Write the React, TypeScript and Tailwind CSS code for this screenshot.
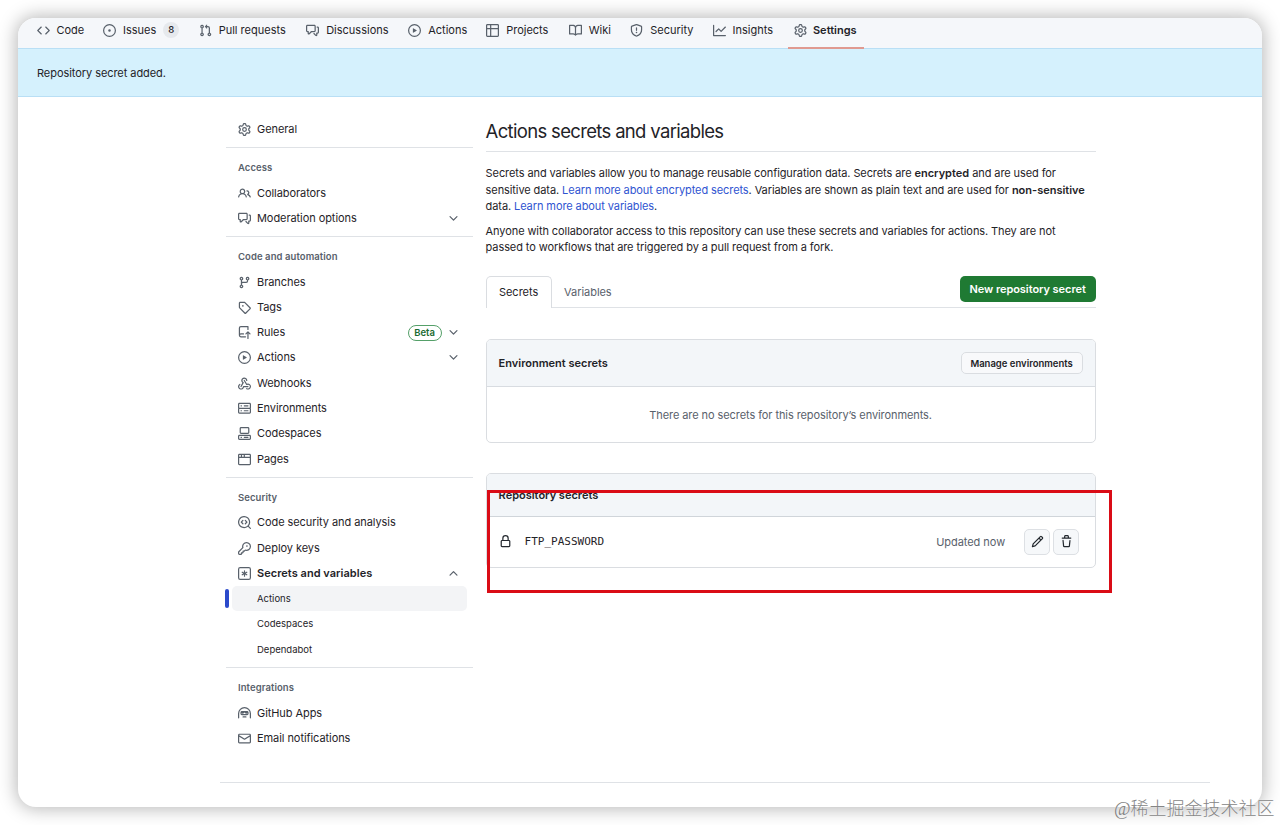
import React from "react";

const PATHS: Record<string, string[]> = {
  code: ["m11.28 3.22 4.25 4.25a.75.75 0 0 1 0 1.06l-4.25 4.25a.749.749 0 0 1-1.275-.326.749.749 0 0 1 .215-.734L13.94 8l-3.72-3.72a.749.749 0 0 1 .326-1.275.749.749 0 0 1 .734.215Zm-6.56 0a.751.751 0 0 1 1.042.018.751.751 0 0 1 .018 1.042L2.06 8l3.72 3.72a.749.749 0 0 1-.326 1.275.749.749 0 0 1-.734-.215L.47 8.53a.75.75 0 0 1 0-1.06Z"],
  issue: ["M8 9.5a1.5 1.5 0 1 0 0-3 1.5 1.5 0 0 0 0 3Z", "M8 0a8 8 0 1 1 0 16A8 8 0 0 1 8 0ZM1.5 8a6.5 6.5 0 1 0 13 0 6.5 6.5 0 0 0-13 0Z"],
  pull: ["M1.5 3.25a2.25 2.25 0 1 1 3 2.122v5.256a2.251 2.251 0 1 1-1.5 0V5.372A2.25 2.25 0 0 1 1.5 3.25Zm5.677-.177L9.573.677A.25.25 0 0 1 10 .854V2.5h1A2.5 2.5 0 0 1 13.5 5v5.628a2.251 2.251 0 1 1-1.5 0V5a1 1 0 0 0-1-1h-1v1.646a.25.25 0 0 1-.427.177L7.177 3.427a.25.25 0 0 1 0-.354ZM3.75 2.5a.75.75 0 1 0 0 1.5.75.75 0 0 0 0-1.5Zm0 9.5a.75.75 0 1 0 0 1.5.75.75 0 0 0 0-1.5Zm8.25.75a.75.75 0 1 0 1.5 0 .75.75 0 0 0-1.5 0Z"],
  discussion: ["M1.75 1h8.5c.966 0 1.75.784 1.75 1.75v5.5A1.75 1.75 0 0 1 10.25 10H7.061l-2.574 2.573A1.458 1.458 0 0 1 2 11.543V10h-.25A1.75 1.75 0 0 1 0 8.25v-5.5C0 1.784.784 1 1.75 1ZM1.5 2.75v5.5c0 .138.112.25.25.25h1a.75.75 0 0 1 .75.75v2.19l2.72-2.72a.749.749 0 0 1 .53-.22h3.5a.25.25 0 0 0 .25-.25v-5.5a.25.25 0 0 0-.25-.25h-8.5a.25.25 0 0 0-.25.25Zm13 2a.25.25 0 0 0-.25-.25h-.5a.75.75 0 0 1 0-1.5h.5c.966 0 1.75.784 1.75 1.75v5.5A1.75 1.75 0 0 1 14.25 12H14v1.543a1.458 1.458 0 0 1-2.487 1.03L9.22 12.28a.749.749 0 0 1 .326-1.275.749.749 0 0 1 .734.215l2.22 2.22v-2.19a.75.75 0 0 1 .75-.75h1a.25.25 0 0 0 .25-.25Z"],
  play: ["M8 0a8 8 0 1 1 0 16A8 8 0 0 1 8 0ZM1.5 8a6.5 6.5 0 1 0 13 0 6.5 6.5 0 0 0-13 0Zm4.879-2.773 4.264 2.559a.25.25 0 0 1 0 .428l-4.264 2.559A.25.25 0 0 1 6 10.559V5.442a.25.25 0 0 1 .379-.215Z"],
  table: ["M0 1.75C0 .784.784 0 1.75 0h12.5C15.216 0 16 .784 16 1.75v12.5A1.75 1.75 0 0 1 14.25 16H1.75A1.75 1.75 0 0 1 0 14.25ZM6.5 6.5v8h7.75a.25.25 0 0 0 .25-.25V6.5Zm8-1.5V1.75a.25.25 0 0 0-.25-.25H6.5V5Zm-13 1.5v7.75c0 .138.112.25.25.25H5v-8ZM5 5V1.5H1.75a.25.25 0 0 0-.25.25V5Z"],
  book: ["M0 1.75A.75.75 0 0 1 .75 1h4.253c1.227 0 2.317.59 3 1.501A3.743 3.743 0 0 1 11.006 1h4.245a.75.75 0 0 1 .75.75v10.5a.75.75 0 0 1-.75.75h-4.507a2.25 2.25 0 0 0-1.591.659l-.622.621a.75.75 0 0 1-1.06 0l-.622-.621A2.25 2.25 0 0 0 5.258 13H.75a.75.75 0 0 1-.75-.75Zm7.251 10.324.004-5.073-.002-2.253A2.25 2.25 0 0 0 5.003 2.5H1.5v9h3.757a3.75 3.75 0 0 1 1.994.574ZM8.755 4.75l-.004 7.322a3.752 3.752 0 0 1 1.992-.572H14.5v-9h-3.495a2.25 2.25 0 0 0-2.25 2.25Z"],
  shield: ["M7.467.133a1.748 1.748 0 0 1 1.066 0l5.25 1.68A1.75 1.75 0 0 1 15 3.48V7c0 1.566-.32 3.182-1.303 4.682-.983 1.498-2.585 2.813-5.032 3.855a1.697 1.697 0 0 1-1.33 0c-2.447-1.042-4.049-2.357-5.032-3.855C1.32 10.182 1 8.566 1 7V3.48a1.75 1.75 0 0 1 1.217-1.667Zm.61 1.429a.25.25 0 0 0-.153 0l-5.25 1.68a.25.25 0 0 0-.174.238V7c0 1.358.275 2.666 1.057 3.86.784 1.194 2.121 2.34 4.366 3.297a.196.196 0 0 0 .154 0c2.245-.956 3.582-2.104 4.366-3.298C13.225 9.666 13.5 8.36 13.5 7V3.48a.251.251 0 0 0-.174-.237l-5.25-1.68ZM8.75 4.75v3a.75.75 0 0 1-1.5 0v-3a.75.75 0 0 1 1.5 0ZM9 10.5a1 1 0 1 1-2 0 1 1 0 0 1 2 0Z"],
  graph: ["M1.5 1.75V13.5h13.75a.75.75 0 0 1 0 1.5H.75a.75.75 0 0 1-.75-.75V1.75a.75.75 0 0 1 1.5 0Zm14.28 2.53-5.25 5.25a.75.75 0 0 1-1.06 0L7 7.06 4.28 9.78a.751.751 0 0 1-1.042-.018.751.751 0 0 1-.018-1.042l3.25-3.25a.75.75 0 0 1 1.06 0L10 7.94l4.72-4.72a.751.751 0 0 1 1.042.018.751.751 0 0 1 .018 1.042Z"],
  gear: ["M8 0a8.2 8.2 0 0 1 .701.031C9.444.095 9.99.645 10.16 1.29l.288 1.107c.018.066.079.158.212.224.231.114.454.243.668.386.123.082.233.09.299.071l1.103-.303c.644-.176 1.392.021 1.82.63.27.385.506.792.704 1.218.315.675.111 1.422-.364 1.891l-.814.806c-.049.048-.098.147-.088.294.016.257.016.515 0 .772-.01.147.038.246.088.294l.814.806c.475.469.679 1.216.364 1.891a7.977 7.977 0 0 1-.704 1.217c-.428.61-1.176.807-1.82.63l-1.102-.302c-.067-.019-.177-.011-.3.071a5.909 5.909 0 0 1-.668.386c-.133.066-.194.158-.211.224l-.29 1.106c-.168.646-.715 1.196-1.458 1.26a8.006 8.006 0 0 1-1.402 0c-.743-.064-1.289-.614-1.458-1.26l-.289-1.106c-.018-.066-.079-.158-.212-.224a5.738 5.738 0 0 1-.668-.386c-.123-.082-.233-.09-.299-.071l-1.103.303c-.644.176-1.392-.021-1.82-.63a8.12 8.12 0 0 1-.704-1.218c-.315-.675-.111-1.422.363-1.891l.815-.806c.05-.048.098-.147.088-.294a6.214 6.214 0 0 1 0-.772c.01-.147-.038-.246-.088-.294l-.815-.806C.635 6.045.431 5.298.746 4.623a7.92 7.92 0 0 1 .704-1.217c.428-.61 1.176-.807 1.82-.63l1.102.302c.067.019.177.011.3-.071.214-.143.437-.272.668-.386.133-.066.194-.158.211-.224l.29-1.106C6.009.645 6.556.095 7.299.03 7.53.01 7.764 0 8 0Zm-.571 1.525c-.036.003-.108.036-.137.146l-.289 1.105c-.147.561-.549.967-.998 1.189-.173.086-.34.183-.5.29-.417.278-.97.423-1.529.27l-1.103-.303c-.109-.03-.175.016-.195.045-.22.312-.412.644-.573.99-.014.031-.021.11.059.19l.815.806c.411.406.562.957.53 1.456a4.709 4.709 0 0 0 0 .582c.032.499-.119 1.05-.53 1.456l-.815.806c-.081.08-.073.159-.059.19.162.346.353.677.573.989.02.03.085.076.195.046l1.102-.303c.56-.153 1.113-.008 1.53.27.161.107.328.204.501.29.447.222.85.629.997 1.189l.289 1.105c.029.109.101.143.137.146a6.6 6.6 0 0 0 1.142 0c.036-.003.108-.036.137-.146l.289-1.105c.147-.561.549-.967.998-1.189.173-.086.34-.183.5-.29.417-.278.97-.423 1.529-.27l1.103.303c.109.029.175-.016.195-.045.22-.313.411-.644.573-.99.014-.031.021-.11-.059-.19l-.815-.806c-.411-.406-.562-.957-.53-1.456a4.709 4.709 0 0 0 0-.582c-.032-.499.119-1.05.53-1.456l.815-.806c.081-.08.073-.159.059-.19a6.464 6.464 0 0 0-.573-.989c-.02-.03-.085-.076-.195-.046l-1.102.303c-.56.153-1.113.008-1.53-.27a4.44 4.44 0 0 0-.501-.29c-.447-.222-.85-.629-.997-1.189l-.289-1.105c-.029-.11-.101-.143-.137-.146a6.6 6.6 0 0 0-1.142 0ZM11 8a3 3 0 1 1-6 0 3 3 0 0 1 6 0ZM9.5 8a1.5 1.5 0 1 0-3.001.001A1.5 1.5 0 0 0 9.5 8Z"],
  people: ["M2 5.5a3.5 3.5 0 1 1 5.898 2.549 5.508 5.508 0 0 1 3.034 4.084.75.75 0 1 1-1.482.235 4 4 0 0 0-7.9 0 .75.75 0 0 1-1.482-.236A5.507 5.507 0 0 1 3.102 8.05 3.493 3.493 0 0 1 2 5.5ZM11 4a3.001 3.001 0 0 1 2.22 5.018 5.01 5.01 0 0 1 2.56 3.012.749.749 0 0 1-.885.954.752.752 0 0 1-.549-.514 3.507 3.507 0 0 0-2.522-2.372.75.75 0 0 1-.574-.73v-.352a.75.75 0 0 1 .416-.672A1.5 1.5 0 0 0 11 5.5.75.75 0 0 1 11 4Zm-5.5-.5a2 2 0 1 0-.001 3.999A2 2 0 0 0 5.5 3.5Z"],
  branch: ["M9.5 3.25a2.25 2.25 0 1 1 3 2.122V6A2.5 2.5 0 0 1 10 8.5H6a1 1 0 0 0-1 1v1.128a2.251 2.251 0 1 1-1.5 0V5.372a2.25 2.25 0 1 1 1.5 0v1.836A2.493 2.493 0 0 1 6 7h4a1 1 0 0 0 1-1v-.628A2.25 2.25 0 0 1 9.5 3.25Zm-6 0a.75.75 0 1 0 1.5 0 .75.75 0 0 0-1.5 0Zm8.25-.75a.75.75 0 1 0 0 1.5.75.75 0 0 0 0-1.5ZM4.25 12a.75.75 0 1 0 0 1.5.75.75 0 0 0 0-1.5Z"],
  tag: ["M1 7.775V2.75C1 1.784 1.784 1 2.75 1h5.025c.464 0 .91.184 1.238.513l6.25 6.25a1.75 1.75 0 0 1 0 2.474l-5.026 5.026a1.75 1.75 0 0 1-2.474 0l-6.25-6.25A1.752 1.752 0 0 1 1 7.775Zm1.5 0c0 .066.026.13.073.177l6.25 6.25a.25.25 0 0 0 .354 0l5.025-5.025a.25.25 0 0 0 0-.354l-6.25-6.25a.25.25 0 0 0-.177-.073H2.75a.25.25 0 0 0-.25.25ZM6 5a1 1 0 1 1 0 2 1 1 0 0 1 0-2Z"],
  repoPush: ["M1 2.5A2.5 2.5 0 0 1 3.5 0h8.75a.75.75 0 0 1 .75.75v3.5a.75.75 0 0 1-1.5 0V1.5h-8a1 1 0 0 0-1 1v6.708A2.493 2.493 0 0 1 3.5 9h3.25a.75.75 0 0 1 0 1.5H3.5a1 1 0 0 0 0 2h5.75a.75.75 0 0 1 0 1.5H3.5A2.5 2.5 0 0 1 1 11.5Zm13.23 7.79h-.001l-1.224-1.224v6.184a.75.75 0 0 1-1.5 0V9.066L10.28 10.29a.75.75 0 0 1-1.06-1.061l2.505-2.504a.75.75 0 0 1 1.06 0L15.29 9.23a.751.751 0 0 1-.018 1.042.751.751 0 0 1-1.042.018Z"],
  webhook: ["M5.5 4.25a2.25 2.25 0 0 1 4.5 0 .75.75 0 0 0 1.5 0 3.75 3.75 0 1 0-6.14 2.889l-2.272 4.258a.75.75 0 0 0 1.324.706L7 7.25a.75.75 0 0 0-.309-1.015A2.25 2.25 0 0 1 5.5 4.25Z", "M7.364 3.607a.75.75 0 0 1 1.03.257l2.608 4.349a3.75 3.75 0 1 1-.628 6.785.75.75 0 0 1 .752-1.299 2.25 2.25 0 1 0-.033-3.88.75.75 0 0 1-1.03-.256L7.107 4.636a.75.75 0 0 1 .257-1.03Z", "M2.9 8.776A.75.75 0 0 1 2.625 9.8 2.25 2.25 0 1 0 6 11.75a.75.75 0 0 1 .75-.751h5.5a.75.75 0 0 1 0 1.5H7.425a3.751 3.751 0 1 1-5.55-3.998.75.75 0 0 1 1.024.274Z"],
  server: ["M1.75 1h12.5c.966 0 1.75.784 1.75 1.75v4c0 .372-.116.717-.314 1 .198.283.314.628.314 1v4a1.75 1.75 0 0 1-1.75 1.75H1.75A1.75 1.75 0 0 1 0 12.75v-4c0-.358.109-.707.314-1a1.739 1.739 0 0 1-.314-1v-4C0 1.784.784 1 1.75 1ZM1.5 2.75v4c0 .138.112.25.25.25h12.5a.25.25 0 0 0 .25-.25v-4a.25.25 0 0 0-.25-.25H1.75a.25.25 0 0 0-.25.25Zm.25 5.75a.25.25 0 0 0-.25.25v4c0 .138.112.25.25.25h12.5a.25.25 0 0 0 .25-.25v-4a.25.25 0 0 0-.25-.25ZM7 4.75A.75.75 0 0 1 7.75 4h4.5a.75.75 0 0 1 0 1.5h-4.5A.75.75 0 0 1 7 4.75ZM7.75 10h4.5a.75.75 0 0 1 0 1.5h-4.5a.75.75 0 0 1 0-1.5ZM3 4.75A.75.75 0 0 1 3.75 4h.5a.75.75 0 0 1 0 1.5h-.5A.75.75 0 0 1 3 4.75ZM3.75 10h.5a.75.75 0 0 1 0 1.5h-.5a.75.75 0 0 1 0-1.5Z"],
  codespaces: ["M0 11.25c0-.966.784-1.75 1.75-1.75h12.5c.966 0 1.75.784 1.75 1.75v3A1.75 1.75 0 0 1 14.25 16H1.75A1.75 1.75 0 0 1 0 14.25Zm2-9.5C2 .784 2.784 0 3.75 0h8.5C13.216 0 14 .784 14 1.75v5a1.75 1.75 0 0 1-1.75 1.75h-8.5A1.75 1.75 0 0 1 2 6.75Zm1.75-.25a.25.25 0 0 0-.25.25v5c0 .138.112.25.25.25h8.5a.25.25 0 0 0 .25-.25v-5a.25.25 0 0 0-.25-.25Zm-2 9.5a.25.25 0 0 0-.25.25v3c0 .138.112.25.25.25h12.5a.25.25 0 0 0 .25-.25v-3a.25.25 0 0 0-.25-.25Z", "M7 12.75a.75.75 0 0 1 .75-.75h4.5a.75.75 0 0 1 0 1.5h-4.5a.75.75 0 0 1-.75-.75Zm-4 0a.75.75 0 0 1 .75-.75h.5a.75.75 0 0 1 0 1.5h-.5a.75.75 0 0 1-.75-.75Z"],
  browser: ["M0 2.75C0 1.784.784 1 1.75 1h12.5c.966 0 1.75.784 1.75 1.75v10.5A1.75 1.75 0 0 1 14.25 15H1.75A1.75 1.75 0 0 1 0 13.25ZM14.5 6h-13v7.25c0 .138.112.25.25.25h12.5a.25.25 0 0 0 .25-.25Zm-6-3.5v2h6V2.75a.25.25 0 0 0-.25-.25ZM5 2.5v2h2v-2Zm-3.25 0a.25.25 0 0 0-.25.25V4.5h2v-2Z"],
  codescan: ["M8.47 4.97a.75.75 0 0 0 0 1.06L9.94 7.5 8.47 8.97a.75.75 0 1 0 1.06 1.06l2-2a.75.75 0 0 0 0-1.06l-2-2a.75.75 0 0 0-1.06 0ZM6.53 6.03a.75.75 0 0 0-1.06-1.06l-2 2a.75.75 0 0 0 0 1.06l2 2a.75.75 0 1 0 1.06-1.06L5.06 7.5l1.47-1.47Z", "M12.246 13.307a7.501 7.501 0 1 1 1.06-1.06l2.474 2.473a.749.749 0 1 1-1.06 1.06l-2.474-2.473ZM1.5 7.5a6.002 6.002 0 0 0 3.608 5.504 6.002 6.002 0 0 0 6.486-1.117.748.748 0 0 1 .292-.293A6 6 0 1 0 1.5 7.5Z"],
  key: ["M10.5 0a5.499 5.499 0 1 1-1.288 10.848l-.932.932a.749.749 0 0 1-.53.22H7v.75a.749.749 0 0 1-.22.53l-.5.5a.749.749 0 0 1-.53.22H5v.75a.749.749 0 0 1-.22.53l-.5.5a.749.749 0 0 1-.53.22h-2A1.75 1.75 0 0 1 0 14.25v-2c0-.199.079-.389.22-.53l4.932-4.932A5.5 5.5 0 0 1 10.5 0Zm-4 5.5c-.001.431.069.86.205 1.269a.75.75 0 0 1-.181.768L1.5 12.56v1.69c0 .138.112.25.25.25h1.69l.06-.06v-1.19a.75.75 0 0 1 .75-.75h1.19l.06-.06v-1.19a.75.75 0 0 1 .75-.75h1.19l1.023-1.025a.75.75 0 0 1 .768-.18A4 4 0 1 0 6.5 5.5ZM11 6a1 1 0 1 1 0-2 1 1 0 0 1 0 2Z"],
  asterisk: ["M0 2.75A2.75 2.75 0 0 1 2.75 0h10.5A2.75 2.75 0 0 1 16 2.75v10.5A2.75 2.75 0 0 1 13.25 16H2.75A2.75 2.75 0 0 1 0 13.25ZM2.75 1.5c-.69 0-1.25.56-1.25 1.25v10.5c0 .69.56 1.25 1.25 1.25h10.5c.69 0 1.25-.56 1.25-1.25V2.75c0-.69-.56-1.25-1.25-1.25Z", "M8 4a.75.75 0 0 1 .75.75V6.7l1.69-.975a.75.75 0 0 1 .75 1.3L9.5 8l1.69.976a.75.75 0 0 1-.75 1.298L8.75 9.3v1.951a.75.75 0 0 1-1.5 0V9.299l-1.69.976a.75.75 0 0 1-.75-1.3L6.5 8l-1.69-.975a.75.75 0 0 1 .75-1.3l1.69.976V4.75A.75.75 0 0 1 8 4Z"],
  hubot: ["M0 8a8 8 0 1 1 16 0v5.25a.75.75 0 0 1-1.5 0V8a6.5 6.5 0 1 0-13 0v5.25a.75.75 0 0 1-1.5 0Z", "M5.5 12.25a.75.75 0 0 1 .75-.75h3.5a.75.75 0 0 1 0 1.5h-3.5a.75.75 0 0 1-.75-.75Z", "M3 6.75C3 5.784 3.784 5 4.75 5h6.5c.966 0 1.75.784 1.75 1.75v1.5A1.75 1.75 0 0 1 11.25 10h-6.5A1.75 1.75 0 0 1 3 8.25Zm1.5 .6v.9c0 .138.112.25.25.25h6.5a.25.25 0 0 0 .25-.25v-.9l-1 .85a.6.6 0 0 1-.8 0L8 6.9 6.3 8.2a.6.6 0 0 1-.8 0Z"],
  mail: ["M1.75 2h12.5c.966 0 1.75.784 1.75 1.75v8.5A1.75 1.75 0 0 1 14.25 14H1.75A1.75 1.75 0 0 1 0 12.25v-8.5C0 2.784.784 2 1.75 2ZM1.5 12.251c0 .138.112.25.25.25h12.5a.25.25 0 0 0 .25-.25V5.809L8.38 9.397a.75.75 0 0 1-.76 0L1.5 5.809v6.442Zm13-8.181v-.32a.25.25 0 0 0-.25-.25H1.75a.25.25 0 0 0-.25.25v.32L8 7.88Z"],
  lock: ["M4 4a4 4 0 0 1 8 0v2h.25c.966 0 1.75.784 1.75 1.75v5.5A1.75 1.75 0 0 1 12.25 15h-8.5A1.75 1.75 0 0 1 2 13.25v-5.5C2 6.784 2.784 6 3.75 6H4Zm8.25 3.5h-8.5a.25.25 0 0 0-.25.25v5.5c0 .138.112.25.25.25h8.5a.25.25 0 0 0 .25-.25v-5.5a.25.25 0 0 0-.25-.25ZM10.5 6V4a2.5 2.5 0 1 0-5 0v2Z"],
  pencil: ["M11.013 1.427a1.75 1.75 0 0 1 2.474 0l1.086 1.086a1.75 1.75 0 0 1 0 2.474l-8.61 8.61c-.21.21-.47.364-.756.445l-3.251.93a.75.75 0 0 1-.927-.928l.929-3.25c.081-.286.235-.547.445-.758l8.61-8.61Zm.176 4.823L9.75 4.81l-6.286 6.287a.253.253 0 0 0-.064.108l-.558 1.953 1.953-.558a.253.253 0 0 0 .108-.064Zm1.238-3.763a.25.25 0 0 0-.354 0L10.811 3.75l1.439 1.44 1.263-1.263a.25.25 0 0 0 0-.354Z"],
  trash: ["M11 1.75V3h2.25a.75.75 0 0 1 0 1.5H2.75a.75.75 0 0 1 0-1.5H5V1.75C5 .784 5.784 0 6.75 0h2.5C10.216 0 11 .784 11 1.75ZM4.496 6.675l.66 6.6a.25.25 0 0 0 .249.225h5.19a.25.25 0 0 0 .249-.225l.66-6.6a.75.75 0 0 1 1.492.149l-.66 6.6A1.748 1.748 0 0 1 10.595 15h-5.19a1.75 1.75 0 0 1-1.741-1.575l-.66-6.6a.75.75 0 1 1 1.492-.15ZM6.5 1.75V3h3V1.75a.25.25 0 0 0-.25-.25h-2.5a.25.25 0 0 0-.25.25Z"],
  down: ["M12.78 5.22a.749.749 0 0 1 0 1.06l-4.25 4.25a.749.749 0 0 1-1.06 0L3.22 6.28a.749.749 0 1 1 1.06-1.06L8 8.939l3.72-3.719a.749.749 0 0 1 1.06 0Z"],
  up: ["M3.22 10.53a.749.749 0 0 1 0-1.06l4.25-4.25a.749.749 0 0 1 1.06 0l4.25 4.25a.749.749 0 1 1-1.06 1.06L8 6.811 4.28 10.53a.749.749 0 0 1-1.06 0Z"],
};

function Icon({ name, className = "text-[#59616b]" }: { name: string; className?: string }) {
  return (
    <svg viewBox="0 0 16 16" fill="currentColor" className={`block h-[13px] w-[13px] shrink-0 ${className}`} aria-hidden="true">
      {PATHS[name].map((d) => (
        <path key={d} d={d} fillRule="evenodd" />
      ))}
    </svg>
  );
}

const TABS = [
  { icon: "code", label: "Code", w: "w-[66.5px]" },
  { icon: "issue", label: "Issues", w: "w-[95.7px]", count: "8" },
  { icon: "pull", label: "Pull requests", w: "w-[107.5px]" },
  { icon: "discussion", label: "Discussions", w: "w-[102px]" },
  { icon: "play", label: "Actions", w: "w-[78px]" },
  { icon: "table", label: "Projects", w: "w-[82.5px]" },
  { icon: "book", label: "Wiki", w: "w-[61.5px]" },
  { icon: "shield", label: "Security", w: "w-[82.3px]" },
  { icon: "graph", label: "Insights", w: "w-[81.2px]" },
];

type Item = { icon: string; label: string; chevron?: string; beta?: boolean; bold?: boolean; children?: string[] };

const GROUPS: { title?: string; items: Item[] }[] = [
  { items: [{ icon: "gear", label: "General" }] },
  {
    title: "Access",
    items: [
      { icon: "people", label: "Collaborators" },
      { icon: "discussion", label: "Moderation options", chevron: "down" },
    ],
  },
  {
    title: "Code and automation",
    items: [
      { icon: "branch", label: "Branches" },
      { icon: "tag", label: "Tags" },
      { icon: "repoPush", label: "Rules", beta: true, chevron: "down" },
      { icon: "play", label: "Actions", chevron: "down" },
      { icon: "webhook", label: "Webhooks" },
      { icon: "server", label: "Environments" },
      { icon: "codespaces", label: "Codespaces" },
      { icon: "browser", label: "Pages" },
    ],
  },
  {
    title: "Security",
    items: [
      { icon: "codescan", label: "Code security and analysis" },
      { icon: "key", label: "Deploy keys" },
      { icon: "asterisk", label: "Secrets and variables", bold: true, chevron: "up", children: ["Actions", "Codespaces", "Dependabot"] },
    ],
  },
  {
    title: "Integrations",
    items: [
      { icon: "hubot", label: "GitHub Apps" },
      { icon: "mail", label: "Email notifications" },
    ],
  },
];

function NavRow({ item }: { item: Item }) {
  return (
    <li>
      <div className="flex h-[25.3px] items-center pl-3 pr-[13px] pt-[1.2px]">
        <Icon name={item.icon} />
        <span className={item.bold ? "ml-1.5 font-semibold tracking-[0.03px]" : "ml-1.5 tracking-[-0.07px]"}>{item.label}</span>
        <span className="ml-auto flex items-center gap-[5.5px]">
          {item.beta && (
            <span className="flex h-4 w-[34px] items-center justify-center rounded-full border border-[#55a069] text-[9.5px] font-semibold text-[#1a6b32]">
              Beta
            </span>
          )}
          {item.chevron && <Icon name={item.chevron} />}
        </span>
      </div>
      {item.children && (
        <ul className="-ml-px text-[9.5px]">
          {item.children.map((c, i) => (
            <li key={c} className="flex h-[25.3px] items-center">
              <span className={i === 0 ? "h-[19px] w-1 rounded-full bg-[#2b4acb]" : "h-[19px] w-1"} />
              <span className={i === 0 ? "ml-[3px] flex h-[25px] w-[235px] items-center rounded-[5px] bg-[#f3f4f6] pl-[25px] pt-[1.2px]" : "ml-[3px] pl-[25px] pt-[1.2px]"}>{c}</span>
            </li>
          ))}
        </ul>
      )}
    </li>
  );
}

function Sidebar() {
  return (
    <nav className="w-[247px] shrink-0 pt-[19.2px]">
      {GROUPS.map((g, i) => (
        <section key={i} className={i > 0 ? "mt-[5.8px] border-t border-[#dfe2e6] pt-[6.3px]" : ""}>
          {g.title && (
            <h2 className="flex h-[25.3px] items-center pl-3 pt-[1.4px] text-[9.5px] font-semibold tracking-[0.08px] text-[#59616b]">{g.title}</h2>
          )}
          <ul>
            {g.items.map((it) => (
              <NavRow key={it.label} item={it} />
            ))}
          </ul>
        </section>
      ))}
    </nav>
  );
}

function Main() {
  return (
    <main className="relative ml-[12.6px] w-[610px] shrink-0">
      <h1 className="flex h-[55px] items-center border-b border-[#dfe2e6] pt-[14px] text-[18.5px] tracking-[-0.67px]">
        Actions secrets and variables
      </h1>
      <p className="mt-[13px] whitespace-nowrap leading-[16.6px] tracking-[-0.09px]">
        Secrets and variables allow you to manage reusable configuration data. Secrets are <b className="font-semibold tracking-normal">encrypted</b> and are used for
        <br />
        sensitive data. <a className="text-[#2f54d1]">Learn more about encrypted secrets</a>. Variables are shown as plain text and are used for{" "}
        <b className="font-semibold tracking-normal">non-sensitive</b>
        <br />
        data. <a className="text-[#2f54d1]">Learn more about variables</a>.
      </p>
      <p className="mt-2 whitespace-nowrap leading-[16.6px] tracking-[-0.09px]">
        Anyone with collaborator access to this repository can use these secrets and variables for actions. They are not
        <br />
        passed to workflows that are triggered by a pull request from a fork.
      </p>

      <div className="mt-5 flex h-[32px] items-start border-b border-[#dfe2e6]">
        <div className="flex h-[32px] w-[66px] items-center justify-center rounded-t-[5px] border border-b-0 border-[#dadde1] bg-white">Secrets</div>
        <div className="ml-[12.5px] flex h-[32px] items-center pt-[2px] tracking-[-0.05px] text-[#59616b]">Variables</div>
        <button className="ml-auto flex h-[26px] w-[136px] items-center justify-center rounded-[5px] bg-[#1f7a33] pt-[2px] font-semibold tracking-[-0.06px] text-white">
          New repository secret
        </button>
      </div>

      <section className="mt-[31px] h-[104px] overflow-hidden rounded-[5px] border border-[#dadde1]">
        <header className="flex h-[47px] items-center justify-between border-b border-[#d8dce1] bg-[#f3f6f9] px-3">
          <h3 className="pt-[2px] font-semibold">Environment secrets</h3>
          <button className="flex h-[22px] w-[122px] items-center justify-center rounded-[5px] border border-[#dadde1] bg-[#f8f9fb] pt-px text-[9.5px] font-semibold">
            Manage environments
          </button>
        </header>
        <p className="flex h-[55px] items-center justify-center pt-[2px] tracking-[-0.08px] text-[#59616b]">There are no secrets for this repository’s environments.</p>
      </section>

      <section className="mt-[30px] h-[95px] overflow-hidden rounded-[5px] border border-[#dadde1]">
        <header className="flex h-[43px] items-center border-b border-[#d0d5da] bg-[#f3f6f9] px-3">
          <h3 className="pt-[2px] font-semibold">Repository secrets</h3>
        </header>
        <div className="flex h-[50px] items-center pl-3">
          <Icon name="lock" className="text-[#24292f]" />
          <span className="ml-[13px] font-['DejaVu_Sans_Mono',monospace] text-[11px]">FTP_PASSWORD</span>
          <span className="ml-auto pt-px tracking-[-0.05px] text-[#59616b]">Updated now</span>
          <button className="ml-[19px] flex h-[26px] w-[26px] items-center justify-center rounded-[5px] border border-[#dde0e4] bg-[#f6f8fa]">
            <Icon name="pencil" className="text-[#24292f]" />
          </button>
          <button className="ml-[3px] mr-[15.5px] flex h-[26px] w-[26px] items-center justify-center rounded-[5px] border border-[#dde0e4] bg-[#f6f8fa]">
            <Icon name="trash" className="text-[#24292f]" />
          </button>
        </div>
      </section>
      <div className="absolute left-[1px] top-[393px] h-[103px] w-[625px] border-[3px] border-[#da0c16]" />
    </main>
  );
}

export default function App() {
  return (
    <div className="relative h-[825px] w-[1280px] overflow-hidden bg-white p-[18px] font-['Inter','Liberation_Sans',sans-serif] text-[11px] leading-none text-[#1f2328]">
      <div className="flex h-[789px] w-[1244px] flex-col overflow-hidden rounded-[18px] bg-white shadow-[0_0_18px_2px_rgba(0,0,0,0.28)]">
        <header className="flex h-[30px] shrink-0 bg-[#f5f7fa] pl-[18.8px]">
          {TABS.map((t) => (
            <a key={t.label} className={`flex h-6 shrink-0 items-center whitespace-nowrap ${t.w}`}>
              <Icon name={t.icon} />
              <span className="ml-[6.7px]">{t.label}</span>
              {t.count && (
                <span className="ml-[7px] flex h-4 w-4 items-center justify-center rounded-full bg-[#e6e9ed] text-[9.5px] font-medium">{t.count}</span>
              )}
            </a>
          ))}
          <a className="relative -ml-[6px] flex h-6 w-[76px] items-center pl-[6px] font-semibold">
            <Icon name="gear" />
            <span className="ml-[6px]">Settings</span>
            <span className="absolute left-0 top-[29px] h-[2px] w-[76px] bg-[#e09a90]" />
          </a>
        </header>
        <div className="flex h-[49px] shrink-0 items-center border-y border-[#b9dff5] bg-[#d5f1fd] pl-[19px] pt-px tracking-[-0.06px]">
          Repository secret added.
        </div>
        <div className="flex h-[685px] shrink-0 pl-[208px]">
          <Sidebar />
          <Main />
        </div>
        <div className="ml-[202px] w-[990px] border-t border-[#dfe2e6]" />
      </div>
      <div className="absolute left-[1114px] top-[797px] whitespace-nowrap font-['Liberation_Serif','Noto_Sans_CJK_SC',serif] text-[18px] font-light leading-6 text-[#858585] [text-shadow:0_0_1px_#fff]">
        @稀土掘金技术社区
      </div>
    </div>
  );
}
